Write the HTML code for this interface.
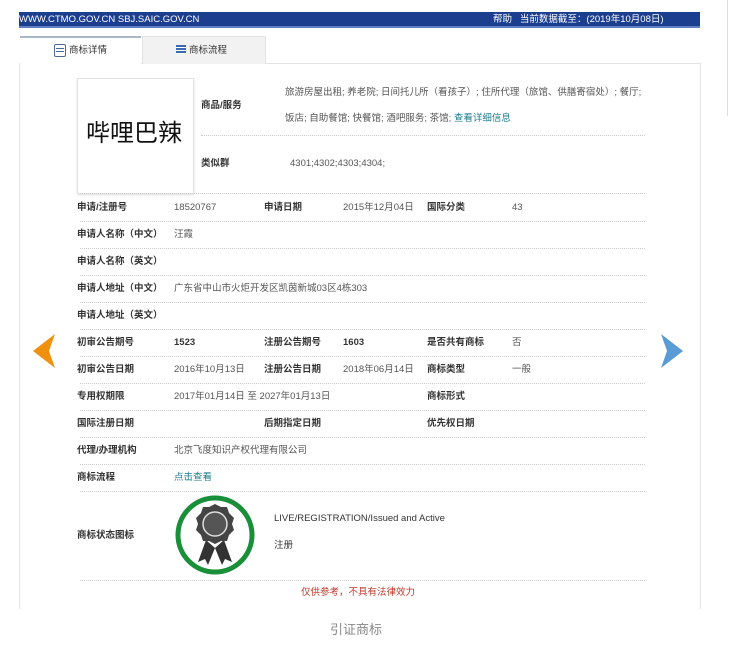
<!DOCTYPE html>
<html><head><meta charset="utf-8"><style>
body{margin:0;width:729px;height:651px;background:#fff;position:relative;overflow:hidden;font-family:"Liberation Sans","Noto Sans CJK SC",sans-serif;}
.a{position:absolute;white-space:nowrap;line-height:13px;}
.l{font-size:9.5px;color:#333;font-weight:bold;}
.v{font-size:9.5px;color:#555;}
.sep{position:absolute;left:80px;width:565px;border-top:1px dotted #ccc;height:0;}
</style></head><body>
<div class="a" style="left:727px;top:0;width:1px;height:116px;background:#ddd"></div>
<div class="a" style="left:19px;top:12px;width:681px;height:14px;background:#1b3e8f;border-bottom:2px solid #5f7fc2"></div>
<div class="a" style="left:19px;top:13px;font-size:9.5px;color:#fff">WWW.CTMO.GOV.CN SBJ.SAIC.GOV.CN</div>
<div class="a" style="left:493px;top:13px;font-size:9.5px;color:#fff">帮助 &nbsp; 当前数据截至：(2019年10月08日)</div>
<div class="a" style="left:19px;top:63px;width:680px;height:545px;border:1px solid #e3e3e3;border-bottom:none"></div>
<div class="a" style="left:20px;top:36px;width:121px;height:28px;background:#fff;border-top:2px solid #a9b7c9"></div>
<div class="a" style="left:142px;top:36px;width:122px;height:27px;background:#f2f2f2;border:1px solid #e3e3e3;border-bottom:none"></div>
<div class="a" style="left:54px;top:44px;width:10px;height:11px;border:1px solid #4a6b9a;border-radius:2px;background:linear-gradient(#4a6b9a 0 0) 1px 3px/8px 1px no-repeat,linear-gradient(#4a6b9a 0 0) 1px 6px/8px 1px no-repeat"></div>
<div class="a v" style="left:69px;top:44px;color:#333">商标详情</div>
<div class="a" style="left:176px;top:45px;width:10px;height:9px;background:repeating-linear-gradient(#3a6bb0 0 2px,#fff 2px 3px)"></div>
<div class="a v" style="left:189px;top:44px;color:#333">商标流程</div>
<div class="a" style="left:77px;top:78px;width:115px;height:114px;border:1px solid #e2e2e2;box-shadow:0 1px 2px #ddd"></div>
<div class="a" style="left:86px;top:120px;font-size:24px;line-height:28px;color:#111">哔哩巴辣</div>
<div class="a l" style="left:201px;top:99px">商品/服务</div>
<div class="a v" style="left:285px;top:86px">旅游房屋出租; 养老院; 日间托儿所（看孩子）; 住所代理（旅馆、供膳寄宿处）; 餐厅;</div>
<div class="a v" style="left:285px;top:112px">饭店; 自助餐馆; 快餐馆; 酒吧服务; 茶馆; <span style="color:#1a7a8a">查看详细信息</span></div>
<div class="sep" style="left:201px;width:444px;top:135px"></div>
<div class="a l" style="left:201px;top:157px">类似群</div>
<div class="a v" style="left:290px;top:157px">4301;4302;4303;4304;</div>
<div class="sep" style="top:193px"></div>

<div class="a l" style="left:77px;top:201px">申请/注册号</div><div class="a v" style="left:174px;top:201px">18520767</div>
<div class="a l" style="left:264px;top:201px">申请日期</div><div class="a v" style="left:343px;top:201px">2015年12月04日</div>
<div class="a l" style="left:427px;top:201px">国际分类</div><div class="a v" style="left:512px;top:201px">43</div>
<div class="sep" style="top:221px"></div>
<div class="a l" style="left:77px;top:228px">申请人名称（中文）</div><div class="a v" style="left:174px;top:228px">汪霞</div>
<div class="sep" style="top:248px"></div>
<div class="a l" style="left:77px;top:255px">申请人名称（英文）</div>
<div class="sep" style="top:275px"></div>
<div class="a l" style="left:77px;top:282px">申请人地址（中文）</div><div class="a v" style="left:174px;top:282px">广东省中山市火炬开发区凯茵新城03区4栋303</div>
<div class="sep" style="top:302px"></div>
<div class="a l" style="left:77px;top:309px">申请人地址（英文）</div>
<div class="sep" style="top:329px"></div>
<div class="a l" style="left:77px;top:336px">初审公告期号</div><div class="a l" style="left:174px;top:336px">1523</div>
<div class="a l" style="left:264px;top:336px">注册公告期号</div><div class="a l" style="left:343px;top:336px">1603</div>
<div class="a l" style="left:427px;top:336px">是否共有商标</div><div class="a v" style="left:512px;top:336px">否</div>
<div class="sep" style="top:356px"></div>
<div class="a l" style="left:77px;top:363px">初审公告日期</div><div class="a v" style="left:174px;top:363px">2016年10月13日</div>
<div class="a l" style="left:264px;top:363px">注册公告日期</div><div class="a v" style="left:343px;top:363px">2018年06月14日</div>
<div class="a l" style="left:427px;top:363px">商标类型</div><div class="a v" style="left:512px;top:363px">一般</div>
<div class="sep" style="top:383px"></div>
<div class="a l" style="left:77px;top:390px">专用权期限</div><div class="a v" style="left:174px;top:390px">2017年01月14日 至 2027年01月13日</div>
<div class="a l" style="left:427px;top:390px">商标形式</div>
<div class="sep" style="top:410px"></div>
<div class="a l" style="left:77px;top:417px">国际注册日期</div><div class="a l" style="left:264px;top:417px">后期指定日期</div><div class="a l" style="left:427px;top:417px">优先权日期</div>
<div class="sep" style="top:437px"></div>
<div class="a l" style="left:77px;top:444px">代理/办理机构</div><div class="a v" style="left:174px;top:444px">北京飞度知识产权代理有限公司</div>
<div class="sep" style="top:464px"></div>
<div class="a l" style="left:77px;top:471px">商标流程</div><div class="a v" style="left:174px;top:471px;color:#1a7a8a">点击查看</div>
<div class="sep" style="top:491px"></div>
<div class="a l" style="left:77px;top:529px">商标状态图标</div>
<svg class="a" style="left:174px;top:494px" width="82" height="82" viewBox="0 0 82 82">
<circle cx="41" cy="41" r="37" fill="#fff" stroke="#1a8f3a" stroke-width="5"/>
<path d="M32 46 L24 68 L31 65 L34 71 L41 54 Z M50 46 L58 68 L51 65 L48 71 L41 54 Z" fill="#333"/>
<polygon points="41,10 47,13 53,13 55,19 60,24 58,30 60,36 55,41 53,47 47,47 41,50 35,47 29,47 27,41 22,36 24,30 22,24 27,19 29,13 35,13" fill="#444"/>
<circle cx="41" cy="30" r="12" fill="#555" stroke="#ddd" stroke-width="1.5"/>
</svg>
<div class="a v" style="left:274px;top:512px;color:#333">LIVE/REGISTRATION/Issued and Active</div>
<div class="a v" style="left:274px;top:539px;color:#333">注册</div>
<div class="sep" style="top:580px"></div>
<div class="a" style="left:301px;top:586px;font-size:9.5px;color:#c0392b">仅供参考，不具有法律效力</div>
<svg class="a" style="left:33px;top:334px" width="24" height="34"><polygon points="22,0 0,17 22,34 16,17" fill="#f0900f"/></svg>
<svg class="a" style="left:659px;top:334px" width="24" height="34"><polygon points="2,0 24,17 2,34 8,17" fill="#5b9bd5"/></svg>
<div class="a" style="left:330px;top:622px;font-size:13px;line-height:16px;color:#888">引证商标</div>
</body></html>
